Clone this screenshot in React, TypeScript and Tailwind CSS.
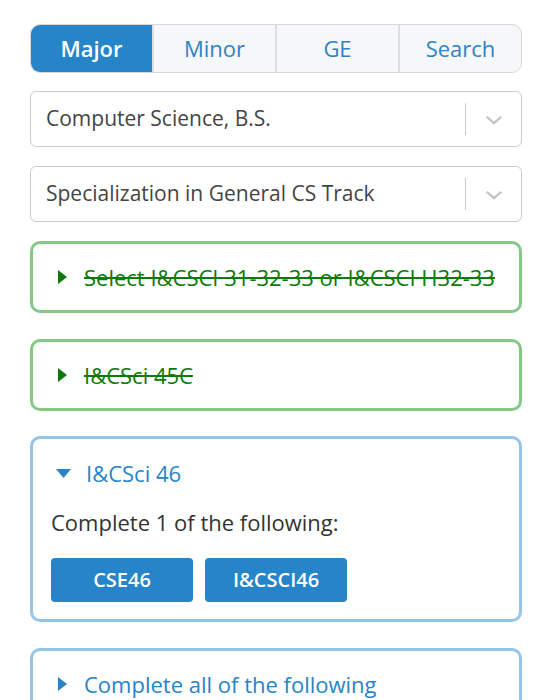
import React, { useState } from 'react';

const tabs = ['Major', 'Minor', 'GE', 'Search'];

const Chevron = () => (
  <svg width="20" height="20" viewBox="0 0 20 20" fill="#c4c4c4">
    <path d="M3.5 7 10 12.6 16.5 7l1.6 1.6L10 15.8 1.9 8.6z" />
  </svg>
);

const Caret = ({ open, color }: { open?: boolean; color: string }) =>
  open ? (
    <svg width="15" height="9" viewBox="0 0 15 9" fill={color} className="shrink-0">
      <path d="M0 0h15L7.5 9z" />
    </svg>
  ) : (
    <svg width="9" height="14" viewBox="0 0 9 14" fill={color} className="shrink-0">
      <path d="M0 0v14l9-7z" />
    </svg>
  );

const Select: React.FC<{ value: string }> = ({ value }) => (
  <div className="flex h-[56px] items-center rounded-[6px] border border-[#cccccc] bg-white">
    <div className="flex-1 truncate pl-[15px] text-[21px] text-[#444444]">{value}</div>
    <div className="h-[32px] w-px bg-[#cccccc]" />
    <div className="flex w-[55px] items-center justify-center">
      <Chevron />
    </div>
  </div>
);

const DoneCard: React.FC<{ title: string }> = ({ title }) => (
  <div className="flex h-[72px] items-center gap-[17px] rounded-[10px] border-[3px] border-[#85c785] bg-white pl-[25px]">
    <Caret color="#0b7a0b" />
    <span className="text-[22px] text-[#0b7a0b] line-through decoration-2">{title}</span>
  </div>
);

export default function App() {
  const [tab, setTab] = useState('Major');

  return (
    <div className="min-h-screen bg-white px-[30px] pt-[24px] font-['Open_Sans',sans-serif]">
      <div className="flex h-[49px] overflow-hidden rounded-[10px] border border-[#d5d9dd] bg-[#f5f7f9]">
        {tabs.map((t, i) => (
          <button
            key={t}
            onClick={() => setTab(t)}
            className={`flex-1 text-[22px] font-medium ${i > 0 ? 'border-l-2 border-[#dcdfe2]' : ''} ${
              tab === t ? 'bg-[#2684c8] font-semibold text-white' : 'text-[#2d83c4]'
            }`}
          >
            {t}
          </button>
        ))}
      </div>

      <div className="mt-[18px] flex flex-col gap-[19px]">
        <Select value="Computer Science, B.S." />
        <Select value="Specialization in General CS Track" />
      </div>

      <div className="mt-[19px] flex flex-col gap-[26px]">
        <DoneCard title="Select I&CSCI 31-32-33 or I&CSCI H32-33" />
        <div className="-mb-px">
          <DoneCard title="I&CSci 45C" />
        </div>

        <div className="rounded-[10px] border-[3px] border-[#94c4e6] bg-white px-[18px] pb-[17px] pt-[19px]">
          <div className="flex items-center gap-[15px] pl-[5px] leading-[30px]">
            <Caret open color="#2684c8" />
            <span className="text-[22px] text-[#2684c8]">I&amp;CSci 46</span>
          </div>
          <div className="mt-[19px] text-[22px] leading-[30px] text-[#333333]">Complete 1 of the following:</div>
          <div className="mt-[21px] flex gap-[12px]">
            {['CSE46', 'I&CSCI46'].map((c) => (
              <button
                key={c}
                className="h-[44px] w-[142px] rounded-[4px] bg-[#2684c8] text-[20px] font-semibold text-white"
              >
                {c}
              </button>
            ))}
          </div>
        </div>

        <div className="h-[80px] rounded-[10px] border-[3px] border-[#94c4e6] bg-white pl-[25px] pt-[18px]">
          <div className="flex items-center gap-[17px] leading-[30px]">
            <Caret color="#2684c8" />
            <span className="text-[22px] text-[#2684c8]">Complete all of the following</span>
          </div>
        </div>
      </div>
    </div>
  );
}
